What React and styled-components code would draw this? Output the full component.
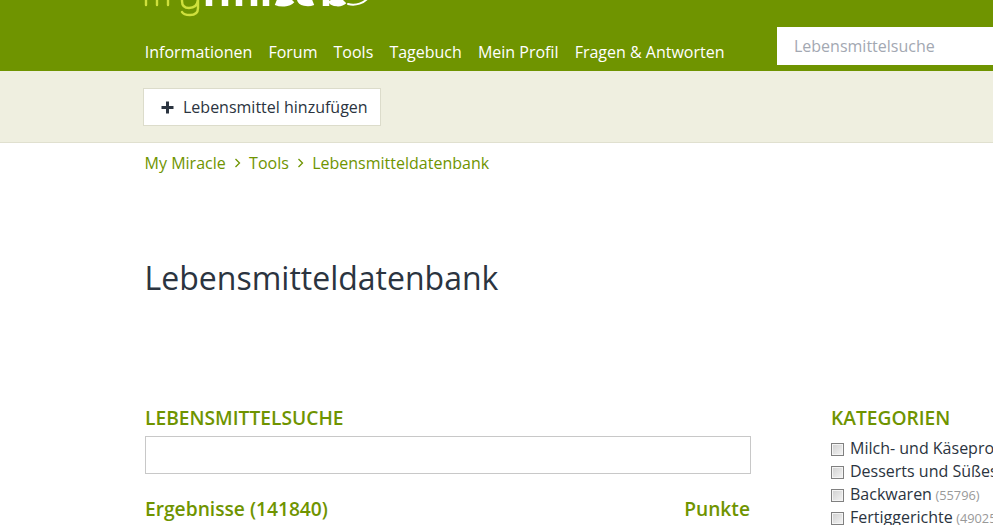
import React from "react";
import styled, { createGlobalStyle } from "styled-components";

const Global = createGlobalStyle`
  html, body { margin: 0; padding: 0; height: 525px; overflow: hidden; background: #fff; }
  body { font-family: "Open Sans", "Liberation Sans", sans-serif; color: #2b3440; }
  * { box-sizing: border-box; }
`;
const Page = styled.div`width: 993px; height: 525px; overflow: hidden;`;
const Header = styled.header`
  height: 71px; background: #6f9400; padding-left: 144.8px; position: relative; overflow: hidden;
  display: flex; align-items: flex-end;
`;
const Logo = styled.svg`position: absolute; left: 140px; top: 0;`;
const Nav = styled.nav`display: flex; gap: 16.1px; height: 38px; font-size: 16px; line-height: 38px; color: #fff; width: 632.2px;`;
const NavLink = styled.a`white-space: nowrap;`;
const TopSearch = styled.div`
  width: 216px; height: 38px; margin-bottom: 6px; background: #fff; color: #a3a8b2;
  font-size: 16px; line-height: 38px; padding-left: 17px;
`;
const ActionBar = styled.div`
  height: 72px; background: #efefe0; border-bottom: 1px solid #e0e0cf; padding: 17px 0 0 143px;
`;
const AddButton = styled.button`
  width: 238px; height: 38px; background: #fff; border: 1px solid #dcdccb; padding: 0 0 0 17px;
  display: flex; align-items: center; gap: 9px; font: 16px "Open Sans", sans-serif; color: #2b3440;
`;
const Crumbs = styled.div`
  display: flex; align-items: center; gap: 8.2px; padding: 8px 0 0 144.6px; font-size: 16px;
  line-height: 24px; color: #6f9400;
`;
const Title = styled.h1`
  margin: 81px 0 0 144.6px; font-size: 32px; line-height: 44px; font-weight: 400; color: #2b3440;
`;
const Columns = styled.div`display: flex; padding: 105px 0 0 145px;`;
const Main = styled.div`width: 606px;`;
const Heading = styled.h2`
  margin: 0; font-size: 19.2px; line-height: 26px; font-weight: 600; color: #6f9400;
`;
const SearchInput = styled.div`height: 38px; border: 1px solid #c8c8c8; background: #fff; margin-top: 5px;`;
const ResultRow = styled.div`display: flex; justify-content: space-between; margin-top: 22px; padding-right: 1px;`;
const Side = styled.aside`margin-left: 80px; width: 162px; overflow: hidden; flex: none;`;
const CatList = styled.ul`list-style: none; margin: 5px 0 0; padding: 0;`;
const Cat = styled.li`display: flex; align-items: center; height: 23px; font-size: 16px; white-space: nowrap;`;
const Box = styled.span`
  width: 13px; height: 13px; flex: none; margin-right: 6px; margin-top: 4px;
  border: 1px solid #808080; box-shadow: inset 0 0 0 1px #f4f4f4;
  background: linear-gradient(135deg, #cfcfcf, #f4f4f4);
`;
const Count = styled.span`font-size: 12.8px; color: #999; margin-left: 3.5px; margin-top: 2px;`;

const Chevron = () => (
  <svg width="7" height="10" viewBox="0 0 7 10" fill="none" stroke="#6f9400" strokeWidth="1.3"><path d="M1.5 1l4 4-4 4" /></svg>
);
const Plus = () => (
  <svg width="13" height="13" viewBox="0 0 13 13" fill="#2b3440"><path d="M5 .5h3V5h4.5v3H8v4.500H5V8H.5V5H5z" /></svg>
);

export default function App() {
  return (
    <Page>
      <Global />
      <Header>
        <Logo width="240" height="20" viewBox="0 0 240 20" fill="none">
          <g stroke="#cfe03c" strokeWidth="2.400" strokeLinecap="round">
            <path d="M6-6V5M17-6V5M28-6V5" />
            <path d="M42-6V1C42 6 44 8 49 8C54 8 58 6 58-2V-6M58-2V8C58 13 55 15 50 15C46 15 43 14 42 12" />
          </g>
          <g stroke="#fff" strokeWidth="6.500">
            <path d="M69-4V6M85-4V6M99-4V6M114-4V6M126-4V6" />
            <path d="M136 2C141 4 148 4 152 0M160-2C160 3 168 4 173 2M186-4V6" />
            <path d="M191 0C193 4 201 4 204 1" />
          </g>
          <path d="M208 4C216 6 224 3 228-2" stroke="#fff" strokeWidth="2" strokeLinecap="round" />
        </Logo>
        <Nav>
          {["Informationen", "Forum", "Tools", "Tagebuch", "Mein Profil", "Fragen & Antworten"].map((t) => <NavLink key={t}>{t}</NavLink>)}
        </Nav>
        <TopSearch>Lebensmittelsuche</TopSearch>
      </Header>
      <ActionBar><AddButton><Plus />Lebensmittel hinzufügen</AddButton></ActionBar>
      <Crumbs>My Miracle<Chevron />Tools<Chevron />Lebensmitteldatenbank</Crumbs>
      <Title>Lebensmitteldatenbank</Title>
      <Columns>
        <Main>
          <Heading>LEBENSMITTELSUCHE</Heading>
          <SearchInput />
          <ResultRow><Heading>Ergebnisse (141840)</Heading><Heading>Punkte</Heading></ResultRow>
        </Main>
        <Side>
          <Heading>KATEGORIEN</Heading>
          <CatList>
            <Cat><Box />Milch- und Käseprodukte<Count>(60000)</Count></Cat>
            <Cat><Box />Desserts und Süßes<Count>(58000)</Count></Cat>
            <Cat><Box />Backwaren<Count>(55796)</Count></Cat>
            <Cat><Box />Fertiggerichte<Count>(49025)</Count></Cat>
          </CatList>
        </Side>
      </Columns>
    </Page>
  );
}
